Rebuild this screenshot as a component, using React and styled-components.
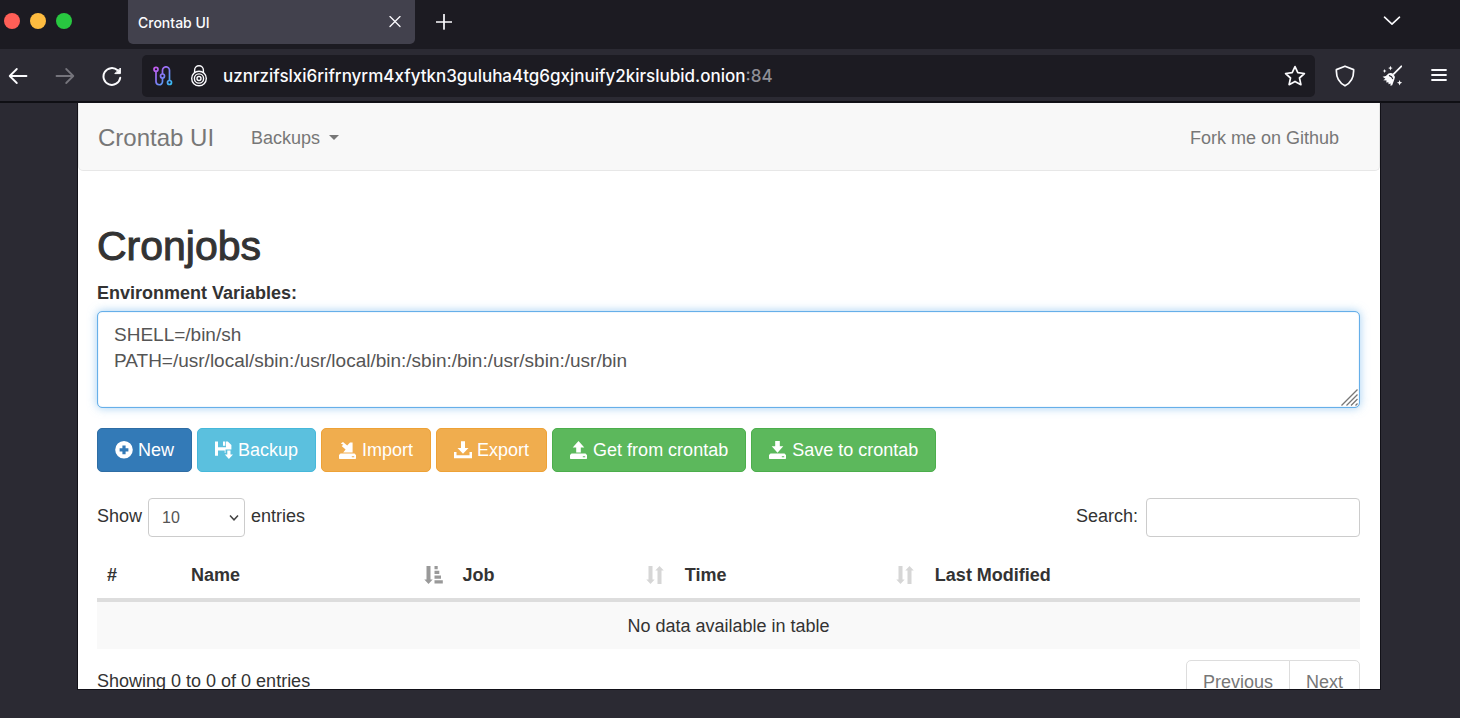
import { useState } from "react";
import styled, { createGlobalStyle } from "styled-components";

const GlobalStyle = createGlobalStyle`
  * {
    box-sizing: border-box;
  }

  body {
    margin: 0;
    background: #2b2a33;
  }

  button,
  input,
  select,
  textarea {
    font-family: inherit;
  }
`;

/* ---------- browser chrome ---------- */

const Browser = styled.div`
  height: 100vh;
  display: flex;
  flex-direction: column;
  overflow: hidden;
  background: #2b2a33;
  color: #fbfbfe;
  font-family: Inter, Roboto, "Liberation Sans", sans-serif;
`;

const TabStrip = styled.header`
  flex: none;
  height: 49px;
  display: flex;
  align-items: flex-start;
  padding: 0 58px 0 4px;
  background: #1c1b22;
`;

const WindowButtons = styled.div`
  display: flex;
  gap: 10px;
  width: 124px;
  padding-top: 13px;
`;

const WindowButton = styled.button`
  width: 16px;
  height: 16px;
  padding: 0;
  border: 0;
  border-radius: 50%;
  background: ${props => props.$color};
`;

const Tab = styled.div`
  width: 287px;
  height: 44px;
  display: flex;
  align-items: center;
  justify-content: space-between;
  padding: 0 12px 0 10px;
  border-radius: 0 0 5px 5px;
  background: #42414d;
  font-size: 14px;
  font-weight: 500;
`;

const IconButton = styled.button`
  flex: none;
  display: flex;
  align-items: center;
  justify-content: center;
  width: ${props => props.$size || 20}px;
  height: ${props => props.$height || props.$size || 20}px;
  margin-left: ${props => props.$push || "0"};
  padding: 0;
  border: 0;
  background: none;
  color: inherit;

  &:disabled {
    color: #75747c;
  }
`;

const Toolbar = styled.nav`
  flex: none;
  height: 54px;
  display: flex;
  align-items: center;
  gap: 20px;
  padding: 2px 11px 0 8px;
  border-bottom: 2px solid #0f0f14;
`;

const ToolbarGroup = styled.div`
  display: flex;
  gap: 27px;
`;

const AddressBar = styled.div`
  flex: 1;
  min-width: 0;
  height: 42px;
  display: flex;
  align-items: center;
  padding: 0 9px 0 11px;
  border-radius: 5px;
  background: #1c1b22;
  font-size: 17px;
  font-weight: 500;
`;

const SiteIcons = styled.div`
  display: flex;
  align-items: center;
  gap: 16px;
  margin-right: 14px;
`;

const AddressInput = styled.input`
  field-sizing: content;
  min-width: 0;
  padding: 0;
  border: 0;
  outline: 0;
  background: none;
  color: #fbfbfe;
  font-size: 17px;
  font-weight: 500;
`;

const Port = styled.span`
  color: #8f8e96;
`;

/* ---------- page ---------- */

const Viewport = styled.div`
  flex: 1;
  min-height: 0;
  padding: 0 80px 29px 78px;
`;

const Page = styled.main`
  height: 100%;
  overflow: hidden;
  background: #fff;
  box-shadow: 0 0 0 1px #121118;
  color: #333;
  font-family: "Liberation Sans", Arial, sans-serif;
  font-size: 18px;
  line-height: 26px;
`;

const Navbar = styled.nav`
  display: flex;
  align-items: center;
  height: 68px;
  padding: 2px 40px 0 19px;
  border: solid #e7e7e7;
  border-width: 0 1px 1px;
  border-radius: 0 0 5px 5px;
  background: #f8f8f8;
`;

const NavLink = styled.a`
  display: flex;
  align-items: center;
  gap: 9px;
  color: #777;
  text-decoration: none;
`;

const Brand = styled(NavLink)`
  margin-right: 37px;
  font-size: 24px;
`;

const ForkLink = styled(NavLink)`
  margin-left: auto;
`;

const Caret = styled.span`
  border-top: 5px solid;
  border-left: 5px solid transparent;
  border-right: 5px solid transparent;
`;

const Content = styled.div`
  padding: 52px 20px 0 19px;
`;

const Title = styled.h1`
  margin: 0 0 11px;
  font-size: 41px;
  font-weight: 400;
  line-height: 46px;
  -webkit-text-stroke: 1px #333;
`;

const FieldLabel = styled.label`
  display: block;
  margin-bottom: 5px;
  font-weight: 700;
`;

const EnvField = styled.div`
  position: relative;
  display: flex;
  margin-bottom: 20px;
`;

const EnvInput = styled.textarea`
  width: 100%;
  height: 97px;
  padding: 10px 16px;
  border: 1px solid #66afe9;
  border-radius: 5px;
  outline: 0;
  resize: none;
  color: #555;
  font-size: 19px;
  line-height: 26px;
  box-shadow: inset 0 0 1px #66afe9, 0 0 10px rgba(102, 175, 233, 0.6);
`;

const ResizeGrip = styled.svg`
  position: absolute;
  right: 2px;
  bottom: 2px;
`;

const Actions = styled.div`
  display: flex;
  gap: 5px;
  margin-bottom: 26px;
`;

const buttonColors = {
  primary: ["#337ab7", "#2e6da4"],
  info: ["#5bc0de", "#46b8da"],
  warning: ["#f0ad4e", "#eea236"],
  success: ["#5cb85c", "#4cae4c"],
};

const ActionButton = styled.button`
  display: flex;
  align-items: center;
  gap: 5px;
  height: 44px;
  padding: 0 17px;
  border: 1px solid ${props => buttonColors[props.$kind][1]};
  border-radius: 5px;
  background: ${props => buttonColors[props.$kind][0]};
  color: #fff;
  font-size: 18px;
`;

const Controls = styled.div`
  display: flex;
  justify-content: space-between;
  margin-bottom: 15px;
`;

const ControlLabel = styled.label`
  display: flex;
  align-items: center;
  gap: ${props => props.$gap}px;
`;

const ControlText = styled.span`
  padding-bottom: 3px;
`;

const SelectWrap = styled.span`
  position: relative;
  display: flex;
`;

const LengthSelect = styled.select`
  appearance: none;
  width: 97px;
  height: 39px;
  padding: 0 13px;
  border: 1px solid #ccc;
  border-radius: 4px;
  background: #fff;
  color: #555;
  font-size: 16px;
`;

const SelectArrow = styled.svg`
  position: absolute;
  right: 6px;
  top: 16px;
  pointer-events: none;
`;

const SearchInput = styled.input`
  width: 214px;
  height: 39px;
  padding: 0 13px;
  border: 1px solid #ccc;
  border-radius: 4px;
  outline: 0;
  color: #555;
  font-size: 16px;
`;

const JobsTable = styled.table`
  width: 100%;
  table-layout: fixed;
  border-collapse: separate;
  border-spacing: 0;
  margin-bottom: 11px;
`;

const HeadCell = styled.th`
  width: ${props => props.$width};
  height: 50px;
  padding: 0 10px;
  border-bottom: 4px solid #ddd;
  text-align: left;
`;

const SortButton = styled.button`
  width: 100%;
  display: flex;
  align-items: center;
  justify-content: space-between;
  padding: 0;
  border: 0;
  background: none;
  color: inherit;
  font-size: 18px;
  font-weight: 700;
  line-height: 26px;
`;

const EmptyCell = styled.td`
  height: 47px;
  padding: 0 10px;
  background: #f9f9f9;
  text-align: center;
`;

const TableFooter = styled.div`
  display: flex;
  justify-content: space-between;
  align-items: flex-start;
`;

const Info = styled.div`
  padding-top: 8px;
`;

const Pagination = styled.div`
  display: flex;
`;

const PageButton = styled.button`
  height: 45px;
  padding: 0 16px;
  border: 1px solid #ddd;
  background: #fff;
  color: #777;
  font-size: 18px;

  &:first-child {
    border-radius: 5px 0 0 5px;
  }

  &:last-child {
    margin-left: -1px;
    border-radius: 0 5px 5px 0;
  }
`;

/* ---------- icons ---------- */

const Line = ({ w = 20, h = 20, stroke = 2, children }) => (
  <svg
    width={w}
    height={h}
    viewBox={`0 0 ${w} ${h}`}
    fill="none"
    stroke="currentColor"
    strokeWidth={stroke}
    strokeLinecap="round"
    strokeLinejoin="round"
    aria-hidden="true"
  >
    {children}
  </svg>
);

const Glyph = ({ w = 18, color = "currentColor", children }) => (
  <svg width={w} height="18" viewBox={`0 0 ${w} 18`} fill={color} aria-hidden="true">
    {children}
  </svg>
);

const CircuitIcon = () => (
  <svg width="20" height="20" viewBox="0 0 20 20" fill="none" strokeWidth="1.7" aria-hidden="true">
    <defs>
      <linearGradient id="circuit" x1="0" y1="0" x2="20" y2="20" gradientUnits="userSpaceOnUse">
        <stop offset="0.1" stopColor="#c55cf0" />
        <stop offset="0.5" stopColor="#7f7cf5" />
        <stop offset="0.95" stopColor="#2fc3f3" />
      </linearGradient>
    </defs>
    <g stroke="url(#circuit)">
      <circle cx="3" cy="3.3" r="2" />
      <circle cx="9.5" cy="10" r="2" />
      <circle cx="16.5" cy="16.5" r="2" />
      <path d="M3 5.3V15.500a3.250 3.250 0 0 0 6.500 0V12M9.500 8V4.300a3.500 3.500 0 0 1 7 0V14.500" />
    </g>
  </svg>
);

const OnionLockIcon = () => (
  <Line h={22} stroke={1.4}>
    <path d="M5.600 7.600V5.200a4.400 4.400 0 0 1 8.800 0v2.400" />
    <circle cx="10" cy="13.5" r="7.3" />
    <circle cx="10" cy="13.5" r="4.6" />
    <circle cx="10" cy="13.5" r="2" />
  </Line>
);

const ReloadIcon = () => (
  <Line>
    <path d="M18.200 11.800A8.400 8.400 0 1 1 15.600 4.300" />
    <path d="M18.400 2.400V7.600H13.200Z" fill="currentColor" strokeWidth="1" />
  </Line>
);

const BroomIcon = () => (
  <Line h={22} stroke={1.8}>
    <path d="M19.300 1.300L11.800 8.800" />
    <path
      d="M6.500 8.400Q9.500 7.400 11.600 9.300Q13.600 11.600 12.400 14.300L10.200 20.200L8.400 20.800L8.600 18.400L6.600 19.300L6.400 17.300L4.200 17.600L4.600 15.600L1.200 15.300L3.400 13.700L.6 11.800Q4.300 11.500 6.500 8.400Z"
      fill="currentColor"
      stroke="none"
    />
    <path d="M7.400 10.600Q10 11.200 10.600 13.600" stroke="#2b2a33" strokeWidth="1.1" />
    <path
      d="M8.400 .8l.7 1.600 1.600.7-1.600.7-.7 1.600-.7-1.600-1.600-.7 1.600-.7ZM2.600 4l.6 1.400 1.400.6-1.400.6-.6 1.400-.6-1.400L.6 6l1.400-.6ZM17.600 15l.8 1.900 1.900.8-1.900.8-.8 1.900-.8-1.900-1.900-.8 1.900-.8Z"
      fill="currentColor"
      stroke="none"
    />
  </Line>
);

const PlusCircleGlyph = () => (
  <Glyph>
    <path
      fillRule="evenodd"
      d="M9 0a8.800 8.800 0 1 1 0 17.600a8.800 8.800 0 0 1 0-17.600ZM7.400 4.400V7.200H4.600V10.400H7.400V13.200H10.600V10.400H13.400V7.200H10.600V4.400Z"
    />
  </Glyph>
);

const FloppySaveGlyph = () => (
  <Glyph>
    <path d="M0 .5H3V6.200H11V.5H12.800L16.400 4V8.400H10.500V12H9.700V9.400H3V14.700H0Z" />
    <path d="M8 .5H10.300V4.800H8Z" />
    <path d="M12.300 9.400H15.500V13.600H18L13.900 18L9.800 13.600H12.300Z" />
  </Glyph>
);

const DiskBase = () => (
  <path
    fillRule="evenodd"
    d="M1.500 12.500H15.500L17 14V17.300Q17 18 16.300 18H.7Q0 18 0 17.300V14ZM12.800 15.200V16.200H15.200V15.200Z"
  />
);

const ImportGlyph = () => (
  <Glyph>
    <DiskBase />
    <path d="M1.800 2.600L4 .9L8.200 4.600L11 1.500H13.600V11.500H4.200L6.600 8.500L2.600 5.100L4.400 3.800Z" />
  </Glyph>
);

const ExportGlyph = () => (
  <Glyph>
    <path d="M7 .3H11V7H14.500L9 12.800L3.500 7H7Z" />
    <path d="M0 11H2.500V14.300H15.500V11H18V17.300H0Z" />
  </Glyph>
);

const OpenGlyph = () => (
  <Glyph>
    <DiskBase />
    <path d="M8.500 0L14.300 6.500H10.800V11.500H6.200V6.500H2.700Z" />
  </Glyph>
);

const SaveGlyph = () => (
  <Glyph>
    <DiskBase />
    <path d="M6.200 0H10.800V5.300H14.300L8.500 11.700L2.700 5.300H6.200Z" />
  </Glyph>
);

const SortAscGlyph = () => (
  <Glyph w={19} color="#999">
    <path d="M2.500 0H6.500V13.500H8.700L4.500 18L.3 13.500H2.500Z" />
    <path d="M10.500 0H13.700V3.200H10.500ZM10.500 4.800H15.300V8H10.500ZM10.500 9.600H17V12.800H10.500ZM10.500 14.200H18.800V17.400H10.500Z" />
  </Glyph>
);

const SortGlyph = () => (
  <Glyph w={19} color="#d6d6d6">
    <path d="M2.500 0H6.500V13.500H8.700L4.500 18L.3 13.500H2.500Z" />
    <path d="M11.500 18H15.500V4.500H17.800L13.500 0L9.300 4.500H11.500Z" />
  </Glyph>
);

/* ---------- app ---------- */

const actions = [
  { label: "New", kind: "primary", Icon: PlusCircleGlyph },
  { label: "Backup", kind: "info", Icon: FloppySaveGlyph },
  { label: "Import", kind: "warning", Icon: ImportGlyph },
  { label: "Export", kind: "warning", Icon: ExportGlyph },
  { label: "Get from crontab", kind: "success", Icon: OpenGlyph },
  { label: "Save to crontab", kind: "success", Icon: SaveGlyph },
];

const columns = [
  { label: "#", width: "6.65%" },
  { label: "Name", width: "21.5%", Icon: SortAscGlyph },
  { label: "Job", width: "17.6%", Icon: SortGlyph },
  { label: "Time", width: "19.8%", Icon: SortGlyph },
  { label: "Last Modified" },
];

const BrowserChrome = () => (
  <>
    <TabStrip>
      <WindowButtons>
        <WindowButton $color="#ff5f57" aria-label="Close window" />
        <WindowButton $color="#febc40" aria-label="Minimize window" />
        <WindowButton $color="#28c840" aria-label="Zoom window" />
      </WindowButtons>
      <Tab>
        Crontab UI
        <IconButton $size={16} aria-label="Close tab">
          <Line w={12} h={12} stroke={1.3}>
            <path d="M1 .5L11 10.500M11 .5L1 10.500" />
          </Line>
        </IconButton>
      </Tab>
      <IconButton $size={58} $height={44} aria-label="New tab">
        <Line w={16} h={16} stroke={1.7}>
          <path d="M8 .5V15M.5 8H15.500" />
        </Line>
      </IconButton>
      <IconButton $height={42} $push="auto" aria-label="List all tabs">
        <Line stroke={1.6}>
          <path d="M2.500 6.200L10 13.200L17.500 6.200" />
        </Line>
      </IconButton>
    </TabStrip>
    <Toolbar>
      <ToolbarGroup>
        <IconButton aria-label="Back">
          <Line stroke={1.8}>
            <path d="M18.500 10H2M8.800 3L1.700 10L8.800 17" />
          </Line>
        </IconButton>
        <IconButton aria-label="Forward" disabled>
          <Line stroke={1.8}>
            <path d="M1.500 10H18M11.200 3L18.300 10L11.200 17" />
          </Line>
        </IconButton>
        <IconButton aria-label="Reload">
          <ReloadIcon />
        </IconButton>
      </ToolbarGroup>
      <AddressBar>
        <SiteIcons>
          <CircuitIcon />
          <OnionLockIcon />
        </SiteIcons>
        <AddressInput
          aria-label="Address"
          defaultValue="uznrzifslxi6rifrnyrm4xfytkn3guluha4tg6gxjnuify2kirslubid.onion"
        />
        <Port>:84</Port>
        <IconButton $size={22} $push="auto" aria-label="Bookmark this page">
          <Line w={22} h={22} stroke={1.7}>
            <path d="M11 1.600L13.800 7.700L20.400 8.500L15.500 13L16.900 19.700L11 16.400L5.100 19.700L6.500 13L1.600 8.500L8.200 7.700Z" />
          </Line>
        </IconButton>
      </AddressBar>
      <ToolbarGroup>
        <IconButton $height={22} aria-label="Security level">
          <Line h={22} stroke={1.7}>
            <path d="M10 1.200L18.600 4.600C19 12 16.500 17.500 10 20.800C3.500 17.500 1 12 1.400 4.600Z" />
          </Line>
        </IconButton>
        <IconButton $height={22} aria-label="New identity">
          <BroomIcon />
        </IconButton>
        <IconButton $height={22} aria-label="Menu">
          <Line h={22} stroke={1.8}>
            <path d="M3 5H17M3 10H17M3 15H17" />
          </Line>
        </IconButton>
      </ToolbarGroup>
    </Toolbar>
  </>
);

const App = () => {
  const [env, setEnv] = useState("SHELL=/bin/sh\nPATH=/usr/local/sbin:/usr/local/bin:/sbin:/bin:/usr/sbin:/usr/bin");

  return (
    <Browser>
      <GlobalStyle />
      <BrowserChrome />
      <Viewport>
        <Page>
          <Navbar>
            <Brand href="#">Crontab UI</Brand>
            <NavLink href="#backups">
              Backups
              <Caret />
            </NavLink>
            <ForkLink href="#fork">Fork me on Github</ForkLink>
          </Navbar>
          <Content>
            <Title>Cronjobs</Title>
            <FieldLabel htmlFor="env">Environment Variables:</FieldLabel>
            <EnvField>
              <EnvInput id="env" spellCheck={false} value={env} onChange={e => setEnv(e.target.value)} />
              <ResizeGrip width="17" height="17" stroke="#777" strokeWidth="1.3" aria-hidden="true">
                <path d="M.5 16.500L16.500 .5M5.500 16.500L16.500 5.500M10 16.500L16.500 10M14.500 16.500L16.500 14.500" />
              </ResizeGrip>
            </EnvField>
            <Actions>
              {actions.map(({ label, kind, Icon }) => (
                <ActionButton key={label} $kind={kind}>
                  <Icon />
                  {label}
                </ActionButton>
              ))}
            </Actions>
            <Controls>
              <ControlLabel $gap={6}>
                <ControlText>Show</ControlText>
                <SelectWrap>
                  <LengthSelect defaultValue="10">
                    <option>10</option>
                    <option>25</option>
                    <option>50</option>
                    <option>100</option>
                  </LengthSelect>
                  <SelectArrow width="10" height="8" fill="none" stroke="#444" strokeWidth="1.5" aria-hidden="true">
                    <path d="M1 1.500L5 5.800L9 1.500" />
                  </SelectArrow>
                </SelectWrap>
                <ControlText>entries</ControlText>
              </ControlLabel>
              <ControlLabel $gap={8}>
                <ControlText>Search:</ControlText>
                <SearchInput type="search" />
              </ControlLabel>
            </Controls>
            <JobsTable>
              <thead>
                <tr>
                  {columns.map(({ label, width, Icon }) => (
                    <HeadCell key={label} $width={width} scope="col">
                      <SortButton>
                        {label}
                        {Icon && <Icon />}
                      </SortButton>
                    </HeadCell>
                  ))}
                </tr>
              </thead>
              <tbody>
                <tr>
                  <EmptyCell colSpan={columns.length}>No data available in table</EmptyCell>
                </tr>
              </tbody>
            </JobsTable>
            <TableFooter>
              <Info>Showing 0 to 0 of 0 entries</Info>
              <Pagination>
                <PageButton>Previous</PageButton>
                <PageButton>Next</PageButton>
              </Pagination>
            </TableFooter>
          </Content>
        </Page>
      </Viewport>
    </Browser>
  );
};

export default App;
